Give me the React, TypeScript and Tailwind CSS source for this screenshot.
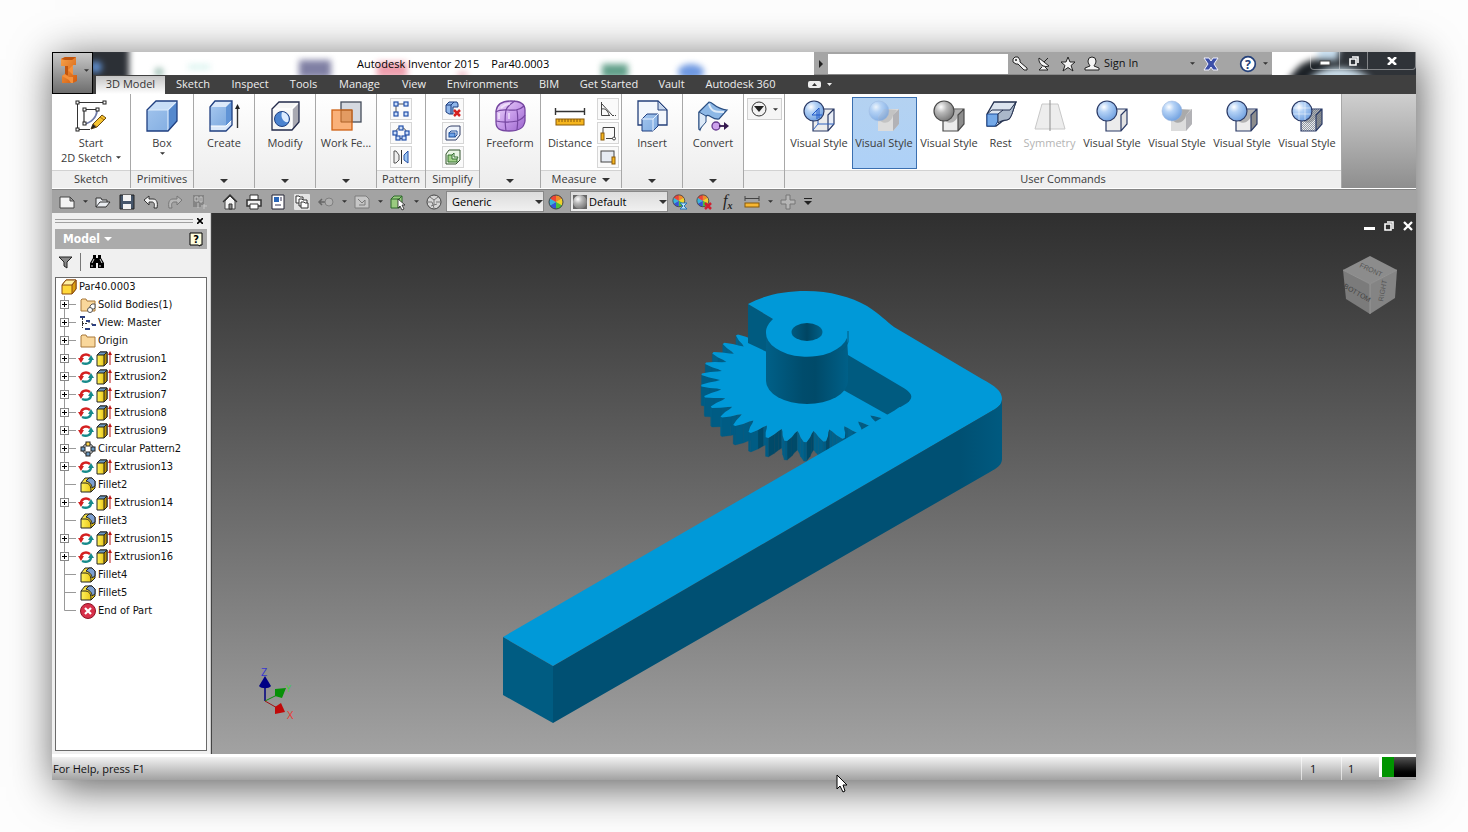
import { useState, type ReactNode } from 'react';
import { clsx } from 'clsx';

/* ------------------------------------------------------------------ */
/* Icons                                                               */
/* ------------------------------------------------------------------ */

interface IconProps {
  children: ReactNode;
  size?: 'sm' | 'md' | 'lg';
}

const Icon = ({ children, size = 'lg' }: IconProps) => (
  <svg
    viewBox={size === 'lg' ? '0 0 32 32' : '0 0 16 16'}
    aria-hidden="true"
    className={clsx('block shrink-0 overflow-visible', size === 'lg' && 'size-8', size === 'md' && 'size-[18px]', size === 'sm' && 'size-4')}
    fill="none"
  >
    {children}
  </svg>
);

const Defs = () => (
  <svg className="absolute size-0" aria-hidden="true">
    <defs>
      <radialGradient id="ballBlue" cx="0.35" cy="0.3" r="0.75">
        <stop offset="0" stopColor="#fff" />
        <stop offset="0.35" stopColor="#b4d2f6" />
        <stop offset="1" stopColor="#6e9fdf" />
      </radialGradient>
      <radialGradient id="ballGray" cx="0.35" cy="0.3" r="0.75">
        <stop offset="0" stopColor="#fff" />
        <stop offset="0.4" stopColor="#b8b8b8" />
        <stop offset="1" stopColor="#757575" />
      </radialGradient>
      <linearGradient id="boxBlue" x1="0" y1="0" x2="1" y2="1">
        <stop offset="0" stopColor="#a4c6ee" />
        <stop offset="1" stopColor="#7fabe0" />
      </linearGradient>
      <linearGradient id="purple" x1="0" y1="0" x2="1" y2="1">
        <stop offset="0" stopColor="#f1ddfc" />
        <stop offset="0.5" stopColor="#c79bea" />
        <stop offset="1" stopColor="#9a63cc" />
      </linearGradient>
      <linearGradient id="yellow" x1="0" y1="0" x2="1" y2="0">
        <stop offset="0" stopColor="#fff35c" />
        <stop offset="1" stopColor="#e3b800" />
      </linearGradient>
      <linearGradient id="logo" x1="0" y1="0" x2="1" y2="1">
        <stop offset="0" stopColor="#f7a24a" />
        <stop offset="1" stopColor="#d25a0c" />
      </linearGradient>
      <pattern id="checker" width="2" height="2" patternUnits="userSpaceOnUse">
        <rect width="1" height="1" fill="#6a7788" />
        <rect x="1" y="1" width="1" height="1" fill="#6a7788" />
      </pattern>
    </defs>
  </svg>
);

const SketchIcon = () => (
  <Icon>
    <path d="M2 2.500H29M2.500 2V30M2 29.500H15" stroke="#333" />
    <path d="M9 24V9.500H22" stroke="#333" strokeWidth="1.200" />
    <path d="M22 10C22 17 16 23 9 24" stroke="#6f7ba8" strokeWidth="1.800" />
    {[[2, 2], [29, 2], [2, 29], [9, 9], [22, 9], [9, 23]].map(([x, y]) => (
      <rect key={`${x}-${y}`} x={x - 1} y={y - 1} width="3" height="3" fill="#fff" stroke="#222" />
    ))}
    <path d="M16 29l2-5 9-9 4 3-9 9z" fill="#f5c330" stroke="#6b4a10" />
    <path d="M25 17l4 3M18 24l4 3" stroke="#a86d12" />
    <path d="M16 29l2-5 3 3z" fill="#222" />
  </Icon>
);

const BoxIcon = () => (
  <Icon>
    <path d="M1 10L10 1H31V21L22 31H1Z" fill="url(#boxBlue)" />
    <path d="M1 10L10 1H31L22 10Z" fill="#c8def7" />
    <path d="M22 10L31 1V21L22 31Z" fill="#5488cd" />
    <path d="M1 10H22L31 1M22 10V31" stroke="#dcebfc" strokeWidth="1.200" />
    <path d="M1 10L10 1H31V21L22 31H1Z" stroke="#1f3f80" strokeWidth="1.300" />
  </Icon>
);

const CreateIcon = () => (
  <Icon>
    <path d="M2 7L7 1H24V25L18 31H2Z" fill="#dbe9fa" />
    <path d="M2 7H18V26H2Z" fill="url(#boxBlue)" />
    <path d="M18 7L24 1V20L18 26Z" fill="#5f93d6" />
    <path d="M2 26H18L24 20" stroke="#fff" />
    <path d="M2 7L7 1H24V25L18 31H2Z" stroke="#1f3f80" strokeWidth="1.300" />
    <path d="M29.500 28V7" stroke="#333" strokeWidth="1.400" />
    <path d="M27 9L29.500 4L32 9Z" fill="#222" />
  </Icon>
);

const ModifyIcon = () => (
  <Icon>
    <path d="M3 9L10 2H30V22L23 30H3Z" fill="#f6f6f6" />
    <path d="M23 9L30 2V22L23 30Z" fill="#a9a9b2" />
    <path d="M3 9H23V30M23 9L30 2" stroke="#fff" strokeWidth="1.500" />
    <path d="M3 9L10 2H30V22L23 30H3Z" stroke="#222a4a" strokeWidth="1.300" />
    <circle cx="13" cy="19" r="7.500" fill="#4a82cf" stroke="#1f3f80" />
    <path d="M13 12A7 7 0 0 1 19 22C15 23 11 18 13 12" fill="#dcebff" />
  </Icon>
);

const WorkIcon = () => (
  <Icon>
    <rect x="11" y="2" width="20" height="20" fill="#d5d9e0" stroke="#444c5a" strokeWidth="1.300" />
    <rect x="2" y="10" width="20" height="20" fill="#f9a96a" fillOpacity=".9" stroke="#cf6215" strokeWidth="1.300" />
    <path d="M11 10H22V22H11Z" fill="#c97f45" fillOpacity=".4" stroke="#a85a20" strokeWidth=".8" />
  </Icon>
);

const FreeformIcon = () => (
  <Icon>
    <path d="M2 11C3 4 8 1 17 1C26 1 31 4 31 10V21C30 29 24 31 15 31C6 31 2 29 2 22Z" fill="url(#purple)" stroke="#7546a0" strokeWidth="1.300" />
    <path d="M2 12C8 8 14 11 22 10C27 9 29 7 30 6M12 31C11 24 11 15 12 10C14 5 18 3 21 1M2 21C10 23 17 22 23 21C28 19 30 17 31 15M23 30C24 22 24 16 23 10" stroke="#7546a0" strokeWidth="1.200" />
    <path d="M7 8C11 4 14 4 16 4M15 13V19M5 13V19" stroke="#fff" strokeWidth="2" opacity=".5" />
  </Icon>
);

const DistanceIcon = () => (
  <Icon>
    <path d="M2 11.500H30M1.500 8V15M30.500 8V15" stroke="#333" strokeWidth="1.400" />
    <rect x="2" y="19" width="28" height="6" fill="#f5b51e" stroke="#8a5a08" />
    <path d="M5 19v3M8 19v3M11 19v3M14 19v3M17 19v3M20 19v3M23 19v3M26 19v3" stroke="#8a5a08" />
  </Icon>
);

const InsertIcon = () => (
  <Icon>
    <path d="M2 1H22L31 10V25H2Z" fill="#f3f7fc" stroke="#24407a" strokeWidth="1.300" />
    <path d="M22 1V10H31Z" fill="#c6d6ec" stroke="#24407a" />
    <path d="M6 19L11 14H22V26L17 31H6Z" fill="url(#boxBlue)" stroke="#1f3f80" />
    <path d="M6 19H17V31M17 19L22 14" stroke="#e6f1ff" />
  </Icon>
);

const ConvertIcon = () => (
  <Icon>
    <path d="M2 12L12 2C16 2 18 9 30 10L22 19C15 20 12 13 9 16L3 30L2 28Z" fill="#8db8e6" stroke="#2b4f82" strokeWidth="1.200" />
    <path d="M2 12L9 16V22L2 30Z" fill="#dce9f7" stroke="#2b4f82" />
    <path d="M12 4C14 12 19 12 27 12" stroke="#fff" strokeOpacity=".7" strokeWidth="2" />
    <circle cx="19" cy="26" r="4" fill="#cda2ec" stroke="#66398f" strokeWidth="1.300" />
    <path d="M22 26H30" stroke="#35194f" strokeWidth="1.800" />
    <path d="M27 22L32 26L27 30Z" fill="#35194f" />
  </Icon>
);

type BallKind = 'wire' | 'realistic' | 'gray' | 'plain' | 'soft' | 'edges' | 'sketchy';

const StyleIcon = ({ kind }: { kind: BallKind }) => {
  const soft = kind === 'realistic' || kind === 'soft';
  const line = soft ? 'none' : kind === 'gray' ? '#4a4a4a' : '#2a3a66';
  const shaded = kind !== 'plain' && kind !== 'wire';
  return (
    <Icon>
      <path d="M10 16L16 9H31V24L25 31H10Z" fill={soft ? '#dcdcdc' : '#ececec'} />
      <path d="M25 15L31 9V24L25 31Z" fill={kind === 'wire' ? '#e9eef7' : kind === 'plain' ? '#e2e2e2' : soft ? '#b2b2b6' : '#8d8d8d'} />
      {shaded && <path d="M10 18C14 26 24 23 25 15L29 10L16 9Z" fill="#777" fillOpacity={kind === 'realistic' ? 0.25 : 0.5} />}
      {kind === 'sketchy' && <path d="M10 16L16 9H31V24L25 31H10Z" fill="url(#checker)" fillOpacity=".7" />}
      {!soft && <path d="M10 16L16 9H31V24L25 31H10ZM25 31V15L31 9" stroke={line} strokeWidth="1.200" />}
      {kind === 'wire' && <path d="M10 30L15 24H31M15 24V17" stroke="#2f62c0" />}
      <circle
        cx="11"
        cy="11"
        r="10"
        fill={kind === 'gray' ? 'url(#ballGray)' : 'url(#ballBlue)'}
        stroke={soft ? '#9ab2d8' : line}
        strokeWidth={soft ? 0.5 : 1.2}
        opacity={kind === 'realistic' ? 0.75 : 1}
      />
      {kind === 'wire' && <path d="M9 15L16 8V18M9 15H19M14 10V19" stroke="#1f58c8" />}
      {kind === 'sketchy' && <path d="M2 8H20M2 14H20M8 2V20M14 2V20" stroke="#fff" strokeOpacity=".5" />}
    </Icon>
  );
};

const RestIcon = () => (
  <Icon>
    <path d="M2 14L9 2H31C28 8 28 14 24 19C21 21 18 19 15 23L11 26H2Z" fill="#dce4ee" stroke="#222f4e" strokeWidth="1.300" />
    <path d="M2 14H13V21L10 26H2Z" fill="#74a9e8" stroke="#1f4f9a" />
    <path d="M13 14L18 10H25L31 2C28 10 27 16 24 19C21 21 18 19 13 23Z" fill="#aab8ca" stroke="#222f4e" />
    <path d="M2 14L7 10H18" stroke="#222f4e" />
  </Icon>
);

const SymmetryIcon = () => (
  <Icon>
    <path d="M8 4H24L31 29H1Z" fill="#ededed" stroke="#c8c8c8" />
    <path d="M16 0V31" stroke="#8d8d8d" />
  </Icon>
);

const Squares = ({ at }: { at: number[][] }) => (
  <>
    {at.map(([x, y]) => (
      <rect key={`${x}-${y}`} x={x - 2} y={y - 2} width="4" height="4" fill="#cfe0fa" stroke="#2450a8" strokeWidth="1.200" />
    ))}
  </>
);

const patternIcons = [
  {
    label: 'Rectangular',
    icon: (
      <>
        <path d="M3 3H13M3 3V13" stroke="#555" />
        <Squares at={[[3, 3], [13, 3], [3, 13], [13, 13]]} />
      </>
    ),
  },
  {
    label: 'Circular',
    icon: (
      <>
        <circle cx="8" cy="8" r="5.500" stroke="#555" />
        <Squares at={[[8, 3], [2, 8], [14, 8], [5, 13], [11, 13]]} />
      </>
    ),
  },
  {
    label: 'Mirror',
    icon: (
      <>
        <path d="M1 2H3L6 6V11L3 14H1Z" fill="#eee" stroke="#555" />
        <path d="M8.500 1V15" stroke="#333" />
        <path d="M15 2L11 6V11L15 14Z" fill="#9cc6f2" stroke="#2450a8" />
      </>
    ),
  },
];

const simplifyIcons = [
  {
    label: 'Remove Details',
    icon: (
      <>
        <path d="M1 4L4 1H12L13 3V6H8V13H4L1 11Z" fill="#8fb6ea" stroke="#1f3f80" />
        <path d="M1 4H6V13M6 4L9 1" stroke="#1f3f80" />
        <path d="M9 9L15 15M15 9L9 15" stroke="#d42020" strokeWidth="2.500" />
      </>
    ),
  },
  {
    label: 'Bounding Box',
    icon: (
      <>
        <path d="M1 6C1 3 4 1 7 1H15V10L11 15H1Z" fill="#eef3fb" stroke="#333f66" />
        <rect x="4" y="8" width="6" height="4" fill="#6ea4ea" stroke="#1f4f9a" />
        <path d="M4 8L6 6H12V10L10 12" stroke="#1f4f9a" />
      </>
    ),
  },
  {
    label: 'Merge',
    icon: (
      <>
        <path d="M1 5L4 1H15V11L11 15H1Z" fill="#eaf5e4" stroke="#35552f" />
        <path d="M3 6H7V10H12V13H3Z" fill="#a4d48c" stroke="#35702f" />
        <path d="M7 6L9 4V8H13L12 10" stroke="#35702f" />
      </>
    ),
  },
];

const measureIcons = [
  {
    label: 'Angle',
    icon: (
      <>
        <path d="M1.500 1V14.500H10M2 3L12 14M2 8C5 7 8 10 9 14" stroke="#444" />
        <path d="M12 14.500H16" stroke="#444" strokeDasharray="2 1" />
      </>
    ),
  },
  {
    label: 'Loop',
    icon: (
      <>
        <path d="M3 8V2.500H14.500V13.500H6" stroke="#444" />
        <rect x="1" y="8" width="3" height="7" fill="#f5b51e" stroke="#8a5a08" />
        <circle cx="14" cy="13.500" r="1.500" fill="#fff" stroke="#444" />
      </>
    ),
  },
  {
    label: 'Area',
    icon: (
      <>
        <rect x="1" y="2" width="13" height="11" fill="#e6ebf3" stroke="#444" />
        <rect x="12" y="8" width="3" height="7" fill="#f5b51e" stroke="#8a5a08" />
      </>
    ),
  },
];

const Caret = ({ wide = false }: { wide?: boolean }) => (
  <svg viewBox="0 0 8 4" aria-hidden="true" className={wide ? 'h-1 w-2' : 'h-[3px] w-[5px]'}>
    <path d="M0 0H8L4 4Z" fill="#333" />
  </svg>
);

/* ------------------------------------------------------------------ */
/* Title bar and tabs                                                  */
/* ------------------------------------------------------------------ */

const AppButton = () => (
  <button
    type="button"
    aria-label="Application menu"
    className="flex w-[41px] shrink-0 items-center justify-between border border-black bg-gradient-to-b from-[#c9c9c9] to-[#6e6e6e] pr-[3px] pb-[6px] pl-[7px]"
  >
    <svg viewBox="0 0 18 28" className="h-7 w-[18px]" aria-hidden="true">
      <path d="M1 3L5 1H16V9H13V19H17V25L13 27H2V20L5 18V10H1Z" fill="url(#logo)" />
      <path d="M1 3L5 1H16L12 4H5ZM5 10H8V19L5 21Z" fill="#c2540c" />
      <path d="M13 9L8 14L13 19ZM2 20L5 18L9 21H13V27H11L9 24Z" fill="#f5913c" />
    </svg>
    <Caret />
  </button>
);

const GlassBackdrop = () => (
  <svg className="absolute inset-0 size-full" viewBox="0 0 721 23" preserveAspectRatio="xMinYMid slice" aria-hidden="true">
    <g className="blur-[3px]">
      <rect x="-10" y="-6" width="46" height="36" fill="#2c3036" />
      <circle cx="3" cy="15" r="6" fill="#5f8fd0" />
      <circle cx="66" cy="20" r="4" fill="#8fb5a8" />
      <rect x="95" y="13" width="22" height="4" fill="#d0f0eb" />
      <rect x="206" y="8" width="32" height="18" fill="#8080a4" />
      <rect x="284" y="10" width="30" height="16" fill="#ee9fae" />
      <rect x="365" y="20" width="9" height="6" fill="#eeb3bd" />
      <rect x="509" y="12" width="26" height="14" fill="#62a08a" />
      <ellipse cx="598" cy="20" rx="13" ry="8" fill="#6f99e2" />
    </g>
  </svg>
);

const HelpTools = () => (
  <div className="flex w-[458px] shrink-0 items-center border-b border-[#888] bg-[#a5a5a5] pt-px text-[#111]">
    <span className="flex w-[14px] justify-center">
      <svg viewBox="0 0 4 8" className="h-2 w-1" aria-hidden="true"><path d="M0 0L4 4L0 8Z" fill="#222" /></svg>
    </span>
    <input type="text" aria-label="Search help" className="h-[20px] w-[180px] bg-white px-1 text-[11px] outline-none" />
    <div className="flex w-24 items-center justify-around">
      <button type="button" aria-label="Subscription">
        <Icon size="sm">
          <path d="M1 3L3 1H6L8 4V6L15 12V14H12L6 8H4L1 6Z" fill="#f4f4f4" stroke="#222" />
          <circle cx="4" cy="4" r="1" fill="#222" />
        </Icon>
      </button>
      <button type="button" aria-label="Communication center">
        <Icon size="sm">
          <path d="M3 2C2 8 8 12 13 10Z" fill="#f4f4f4" stroke="#222" />
          <path d="M8 6L12 2M6 11L3 14H12L9 11" fill="#f4f4f4" stroke="#222" />
        </Icon>
      </button>
      <button type="button" aria-label="Favorites">
        <Icon size="sm">
          <path d="M8 1L10 6H15L11 9.500L13 15L8 11.500L3 15L5 9.500L1 6H6Z" fill="#f4f4f4" stroke="#222" />
        </Icon>
      </button>
      <button type="button" aria-label="Account">
        <Icon size="sm">
          <path d="M4 5A4 4 0 0 1 12 5C12 8 10 9 10 10L15 12V14H1V12L6 10C6 9 4 8 4 5Z" fill="#f4f4f4" stroke="#222" />
        </Icon>
      </button>
    </div>
    <button type="button" className="flex flex-1 items-center justify-between pr-2 text-[11px]">
      Sign In
      <Caret />
    </button>
    <button type="button" aria-label="Exchange apps" className="mr-5">
      <Icon size="sm">
        <path d="M1 2H6L8 5L10 2H15L11 8L15 14H10L8 11L6 14H1L5 8Z" fill="#3d50a8" stroke="#f2f2ff" />
      </Icon>
    </button>
    <button type="button" aria-label="Help" className="flex items-center gap-[6px] pr-1">
      <Icon size="md">
        <circle cx="8" cy="8" r="6.500" fill="#fff" stroke="#24407a" strokeWidth="1.500" />
        <text x="8" y="12" textAnchor="middle" fontSize="11" fontWeight="700" fontFamily="Open Sans, sans-serif" fill="#24407a">?</text>
      </Icon>
      <Caret />
    </button>
  </div>
);

const WindowControls = () => (
  <div className="relative flex w-[144px] shrink-0 justify-end overflow-hidden bg-[#2f3338]">
    <svg className="absolute inset-0 size-full" viewBox="0 0 144 23" preserveAspectRatio="none" aria-hidden="true">
      <g className="blur-[3px]">
        <path d="M-9 -9H72L64 4L30 12L14 30H-9Z" fill="#fff" />
        <path d="M16 28C26 12 36 4 62 8L40 28Z" fill="#1c2126" />
        <path d="M36 28C50 12 82 12 100 28Z" fill="#cfe3f0" />
        <rect x="46" y="-4" width="20" height="12" fill="#c5dced" />
      </g>
    </svg>
    <div className="relative mb-[5px] flex rounded-b border border-t-0 border-white/40">
      <button type="button" aria-label="Minimize" className="flex w-[29px] items-center justify-center border-r border-white/40">
        <svg viewBox="0 0 12 10" className="h-[10px] w-3" aria-hidden="true"><rect x="1" y="5" width="10" height="4" fill="#fff" stroke="#444" /></svg>
      </button>
      <button type="button" aria-label="Restore" className="flex w-7 items-center justify-center border-r border-white/40">
        <svg viewBox="0 0 10 10" className="size-[10px]" fill="none" aria-hidden="true"><path d="M1 3H7V9H1ZM3 1H9V7" stroke="#fff" strokeWidth="1.600" /></svg>
      </button>
      <button type="button" aria-label="Close" className="flex w-[47px] items-center justify-center">
        <svg viewBox="0 0 10 8" className="h-2 w-[10px]" aria-hidden="true"><path d="M1 0L9 8M9 0L1 8" stroke="#fff" strokeWidth="2.500" /></svg>
      </button>
    </div>
  </div>
);

const tabs = [
  { label: '3D Model', width: 'w-[69px]' },
  { label: 'Sketch', width: 'w-[56px]' },
  { label: 'Inspect', width: 'w-[58px]' },
  { label: 'Tools', width: 'w-[49px]' },
  { label: 'Manage', width: 'w-[63px]' },
  { label: 'View', width: 'w-[46px]' },
  { label: 'Environments', width: 'w-[91px]' },
  { label: 'BIM', width: 'w-[42px]' },
  { label: 'Get Started', width: 'w-[78px]' },
  { label: 'Vault', width: 'w-[47px]' },
  { label: 'Autodesk 360', width: 'w-[91px]' },
];

const Header = () => {
  const [active, setActive] = useState('3D Model');
  return (
    <header className="flex h-[42px] bg-[#404040]">
      <AppButton />
      <div className="flex min-w-0 flex-1 flex-col">
        <div className="flex h-[23px]">
          <div className="relative flex-1 overflow-hidden bg-white">
            <GlassBackdrop />
            <h1 className="relative flex gap-3 pl-[264px] text-[11px] leading-[23px] whitespace-nowrap text-black">
              <span>Autodesk Inventor 2015</span>
              <span>Par40.0003</span>
            </h1>
          </div>
          <HelpTools />
          <WindowControls />
        </div>
        <nav className="flex h-[19px] items-stretch pt-px pl-[3px]">
          {tabs.map((tab) => (
            <button
              key={tab.label}
              type="button"
              onClick={() => setActive(tab.label)}
              className={clsx(
                tab.width,
                'shrink-0 pb-[2px] text-center text-[11px] leading-[16px] whitespace-nowrap',
                tab.label === active ? 'bg-gradient-to-b from-[#c4c4c4] to-white text-[#333]' : 'text-[#eee]'
              )}
            >
              {tab.label}
            </button>
          ))}
          <button type="button" aria-label="Minimize ribbon" className="ml-[22px] flex items-center gap-[6px] pb-[2px]">
            <svg viewBox="0 0 13 7" className="h-[7px] w-[13px]" aria-hidden="true">
              <rect width="13" height="7" rx="2" fill="#eee" />
              <path d="M4 5L6.500 2L9 5Z" fill="#333" />
            </svg>
            <svg viewBox="0 0 5 3" className="h-[3px] w-[5px]" aria-hidden="true"><path d="M0 0H5L2.500 3Z" fill="#eee" /></svg>
          </button>
        </nav>
      </div>
    </header>
  );
};

/* ------------------------------------------------------------------ */
/* Ribbon                                                              */
/* ------------------------------------------------------------------ */

interface PanelProps {
  width: string;
  title?: string;
  more?: boolean;
  children: ReactNode;
}

const Panel = ({ width, title, more, children }: PanelProps) => (
  <section className={clsx(width, 'flex shrink-0 flex-col border-r border-[#a8a8a8] bg-white')}>
    <div className="flex flex-1 justify-center">{children}</div>
    <h2 className="flex h-[18px] items-center justify-center gap-[6px] border-t border-[#d2d2d2] bg-[#efefef] text-[11px] text-[#3a3a3a]">
      {title}
      {more && <Caret wide />}
    </h2>
  </section>
);

const MenuPanel = ({ label, icon }: { label: string; icon: ReactNode }) => (
  <button
    type="button"
    className="flex w-[61px] shrink-0 flex-col items-center border-r border-[#a8a8a8] bg-gradient-to-b from-white to-[#ececec] pt-[6px] pb-[5px]"
  >
    {icon}
    <span className="mt-[3px] text-[11px] leading-[15px] whitespace-nowrap">{label}</span>
    <span className="mt-auto"><Caret wide /></span>
  </button>
);

const SmallStack = ({ items }: { items: { label: string; icon: ReactNode }[] }) => (
  <div className="flex flex-col gap-[2px] pt-1">
    {items.map((item) => (
      <button
        key={item.label}
        type="button"
        aria-label={item.label}
        className="flex size-[22px] items-center justify-center border border-[#d6d6d6] bg-[#fafafa]"
      >
        <Icon size="sm">{item.icon}</Icon>
      </button>
    ))}
  </div>
);

const userCommands = [
  { label: 'Visual Style', width: 'w-[65px]', icon: <StyleIcon kind="wire" /> },
  { label: 'Visual Style', width: 'w-[65px]', icon: <StyleIcon kind="realistic" />, active: true },
  { label: 'Visual Style', width: 'w-[65px]', icon: <StyleIcon kind="gray" /> },
  { label: 'Rest', width: 'w-[38px]', icon: <RestIcon /> },
  { label: 'Symmetry', width: 'w-[60px]', icon: <SymmetryIcon />, disabled: true },
  { label: 'Visual Style', width: 'w-[65px]', icon: <StyleIcon kind="plain" /> },
  { label: 'Visual Style', width: 'w-[65px]', icon: <StyleIcon kind="soft" /> },
  { label: 'Visual Style', width: 'w-[65px]', icon: <StyleIcon kind="edges" /> },
  { label: 'Visual Style', width: 'w-[65px]', icon: <StyleIcon kind="sketchy" /> },
];

const Ribbon = () => (
  <div className="flex h-[95px] border-b border-white bg-gradient-to-b from-[#cfcfcf] to-[#8e8e8e] text-[#3a3a3a]">
    <Panel width="w-[79px]" title="Sketch">
      <button type="button" className="flex w-full flex-col items-center pt-[6px] text-[11px] leading-[15px]">
        <SketchIcon />
        <span className="mt-[3px]">Start</span>
        <span className="flex w-full items-center justify-center gap-1">2D Sketch <Caret /></span>
      </button>
    </Panel>
    <Panel width="w-[63px]" title="Primitives">
      <button type="button" className="flex flex-col items-center pt-[6px] text-[11px] leading-[15px]">
        <BoxIcon />
        <span className="mt-[3px]">Box</span>
        <span className="mt-[2px]"><Caret /></span>
      </button>
    </Panel>
    <MenuPanel label="Create" icon={<CreateIcon />} />
    <MenuPanel label="Modify" icon={<ModifyIcon />} />
    <MenuPanel label="Work Fe..." icon={<WorkIcon />} />
    <Panel width="w-[49px]" title="Pattern"><SmallStack items={patternIcons} /></Panel>
    <Panel width="w-[54px]" title="Simplify"><SmallStack items={simplifyIcons} /></Panel>
    <MenuPanel label="Freeform" icon={<FreeformIcon />} />
    <Panel width="w-[81px]" title="Measure" more>
      <button type="button" className="flex w-[54px] flex-col items-center pt-[6px] text-[11px] leading-[15px]">
        <DistanceIcon />
        <span className="mt-[3px]">Distance</span>
      </button>
      <SmallStack items={measureIcons} />
    </Panel>
    <MenuPanel label="Insert" icon={<InsertIcon />} />
    <MenuPanel label="Convert" icon={<ConvertIcon />} />
    <Panel width="w-[41px]">
      <button type="button" aria-label="More" className="mt-1 flex h-[22px] w-[35px] items-center justify-center gap-[6px] border border-[#d0d0d0] bg-[#f5f5f5]">
        <Icon size="sm">
          <circle cx="8" cy="8" r="7" fill="#f2f2f2" stroke="#333" />
          <path d="M3 5H13L8 11Z" fill="#222" />
        </Icon>
        <Caret />
      </button>
    </Panel>
    <Panel width="w-[557px]" title="User Commands">
      {userCommands.map((cmd, index) => (
        <button
          key={index}
          type="button"
          disabled={cmd.disabled}
          className={clsx(
            cmd.width,
            'mt-[3px] flex h-[72px] shrink-0 flex-col items-center border pt-[2px] text-[11px] leading-[15px] whitespace-nowrap',
            cmd.active ? 'border-[#3a6fb0] bg-gradient-to-b from-[#b4d2f1] to-[#aed1f7]' : 'border-transparent',
            cmd.disabled && 'text-[#b4b4b4]'
          )}
        >
          {cmd.icon}
          <span className="mt-[3px]">{cmd.label}</span>
        </button>
      ))}
    </Panel>
  </div>
);

/* ------------------------------------------------------------------ */
/* Quick access toolbar                                                */
/* ------------------------------------------------------------------ */

const ColorWheel = () => (
  <>
    <path d="M8 8V1A7 7 0 0 1 14 4.500Z" fill="#f08a2a" />
    <path d="M8 8L14 4.500A7 7 0 0 1 14 11.500Z" fill="#f0d22a" />
    <path d="M8 8L14 11.500A7 7 0 0 1 8 15Z" fill="#4cc23a" />
    <path d="M8 8V15A7 7 0 0 1 2 11.500Z" fill="#3355d8" />
    <path d="M8 8L2 11.500A7 7 0 0 1 2 4.500Z" fill="#38b4dc" />
    <path d="M8 8L2 4.500A7 7 0 0 1 8 1Z" fill="#ec4436" />
    <circle cx="8" cy="8" r="7" stroke="#444" />
  </>
);

interface QuickItem {
  label: string;
  caret?: boolean;
  gap?: boolean;
  icon?: ReactNode;
}

const quickItems: QuickItem[] = [
  { label: 'New', icon: <path d="M1 3H11L15 7V14H1ZM11 3V7H15" fill="#f4f4f4" stroke="#444" /> },
  { label: 'New options', caret: true },
  { label: 'Open', icon: <path d="M1 13V4H6L7 6H12V8M1 13L5 8H15L11 13Z" fill="#e9ecf0" stroke="#333" /> },
  {
    label: 'Save',
    icon: (
      <>
        <path d="M1 1H15V15H1Z" fill="#46566b" stroke="#222" />
        <path d="M4 1H12V7H4ZM4 10H12V15H4Z" fill="#f2f2f2" />
      </>
    ),
  },
  { label: 'Undo', icon: <path d="M1 6L6 2V5H10C14 5 15 9 14 14H11C12 10 11 8 9 8H6V11Z" fill="#f2f2f2" stroke="#333" /> },
  { label: 'Redo', icon: <path d="M15 6L10 2V5H6C2 5 1 9 2 14H5C4 10 5 8 7 8H10V11Z" fill="#b8b8b8" stroke="#777" /> },
  {
    label: 'Update',
    icon: (
      <>
        <path d="M2 1H13V13H2Z" fill="#858585" />
        <path d="M4 3H7V7H4ZM9 3H11V8H9ZM7 9V14M13 10V15M10 12H16" stroke="#c6c6c6" />
      </>
    ),
  },
  {
    label: 'Home',
    gap: true,
    icon: (
      <>
        <path d="M3 7L8 2L13 7V15H3Z" fill="#f4f4f4" stroke="#444" />
        <path d="M1 8L8 1L15 8" stroke="#333" strokeWidth="1.300" />
        <path d="M7 10H10V15H7Z" fill="#8d8d8d" stroke="#333" />
      </>
    ),
  },
  {
    label: 'Print',
    icon: (
      <>
        <path d="M4 1H12V6H4Z" fill="#fff" stroke="#333" />
        <path d="M1 6H15V12H1Z" fill="#f2f2f2" stroke="#333" strokeWidth="1.500" />
        <path d="M4 10H12V15H4Z" fill="#fff" stroke="#333" />
      </>
    ),
  },
  {
    label: 'Properties',
    icon: (
      <>
        <path d="M2 1H14V15H2Z" fill="#fff" stroke="#223" />
        <path d="M4 3H9V8H4Z" fill="#2a66b8" />
        <path d="M10 4H12M10 6H12M5 11H11" stroke="#335" />
      </>
    ),
  },
  {
    label: 'Copy',
    icon: (
      <>
        <rect width="16" height="16" rx="1" fill="#e4e4e4" />
        <path d="M2 2H5L6 3H9V9H2Z" fill="#fff" stroke="#333" />
        <path d="M5 5H8L9 6H13V12H5Z" fill="#fff" stroke="#333" />
        <path d="M7 8H10L11 9H14V14H7Z" fill="#fff" stroke="#333" />
      </>
    ),
  },
  {
    label: 'Return',
    icon: (
      <>
        <path d="M1 8H8M4 5L1 8L4 11" stroke="#666" strokeWidth="1.500" />
        <circle cx="11" cy="8" r="4" fill="#b0b0b0" stroke="#808080" />
      </>
    ),
  },
  { label: 'Return options', caret: true },
  { label: 'Rebuild', icon: <path d="M1 2H12L15 5V14H1ZM4 5L8 9L11 6V11H5" fill="#c6c6c6" stroke="#7c7c7c" /> },
  { label: 'Rebuild options', caret: true },
  {
    label: 'Select',
    icon: (
      <>
        <path d="M1 5L4 2H12V11L9 14H1Z" fill="#9acb80" stroke="#2d6a2a" />
        <path d="M1 5H9V14M9 5L12 2" stroke="#2d6a2a" />
        <path d="M8 5V14L10 12L12 16L14 15L12 11H15Z" fill="#fff" stroke="#222" strokeWidth=".8" />
      </>
    ),
  },
  { label: 'Select options', caret: true },
  {
    label: 'Material',
    icon: (
      <>
        <circle cx="8" cy="8" r="7" fill="#d6d6d6" stroke="#444" />
        <path d="M4 3L8 6L12 3M2 8H6L8 14M10 8H14M8 6V11M5 12L11 10" stroke="#777" />
      </>
    ),
  },
];

const QuickButton = ({ item }: { item: QuickItem }) => (
  <button
    type="button"
    aria-label={item.label}
    className={clsx('flex h-full shrink-0 items-center justify-center', item.caret ? 'w-3' : 'w-6', item.gap && 'ml-[7px]')}
  >
    {item.caret ? <Caret /> : <Icon size="sm">{item.icon}</Icon>}
  </button>
);

const appearanceItems: QuickItem[] = [
  { label: 'Adjust appearance', icon: <><g transform="scale(.85)"><ColorWheel /></g><path d="M8 9H15L12 12L15 15H8L11 12Z" fill="#bfe3fa" stroke="#2277bb" /></> },
  { label: 'Clear appearance', icon: <><g transform="scale(.85)"><ColorWheel /></g><path d="M9 9L15 15M15 9L9 15" stroke="#d02030" strokeWidth="2.500" /></> },
  {
    label: 'Parameters',
    icon: (
      <text x="3" y="12" fontFamily="Liberation Serif, serif" fontStyle="italic" fontSize="16" fill="#222">
        f<tspan fontSize="10" dy="3" fontWeight="700">x</tspan>
      </text>
    ),
  },
  { label: 'Measure', icon: <><path d="M1 4.500H15M1 2V7M15 2V7" stroke="#444" /><rect x="1" y="9" width="14" height="4" fill="#f7b733" stroke="#8a5a08" /></> },
  { label: 'Measure options', caret: true },
  { label: 'Add', icon: <path d="M6 1H10V6H15V10H10V15H6V10H1V6H6Z" fill="#b5b5b5" stroke="#777" /> },
];

const QuickAccess = () => (
  <div className="flex h-6 items-center border-t border-[#858585] bg-[#a3a3a3] pl-[3px]">
    {quickItems.map((item) => <QuickButton key={item.label} item={item} />)}
    <div className="relative h-[21px] w-[98px] border border-[#888] bg-gradient-to-b from-[#dcdcdc] to-[#f0f0f0]">
      <select aria-label="Material" className="block h-[19px] w-full appearance-none pl-[5px] text-[11px] leading-[17px] text-black">
        <option>Generic</option>
      </select>
      <span className="pointer-events-none absolute inset-y-0 right-0 flex items-center"><Caret wide /></span>
    </div>
    <QuickButton item={{ label: 'Appearance', icon: <ColorWheel /> }} />
    <div className="relative ml-[2px] h-[21px] w-[98px] border border-[#888] bg-gradient-to-b from-[#dcdcdc] to-[#f0f0f0]">
      <select aria-label="Appearance" className="block h-[19px] w-full appearance-none pl-[18px] text-[11px] leading-[17px] text-black">
        <option>Default</option>
      </select>
      <span className="pointer-events-none absolute inset-y-0 left-[2px] flex items-center">
        <svg viewBox="0 0 14 14" className="size-[14px]" aria-hidden="true">
          <rect width="14" height="14" fill="#666" />
          <circle cx="7" cy="7" r="7" fill="url(#ballGray)" />
        </svg>
      </span>
      <span className="pointer-events-none absolute inset-y-0 right-0 flex items-center"><Caret wide /></span>
    </div>
    {appearanceItems.map((item) => <QuickButton key={item.label} item={item} />)}
    <button type="button" aria-label="Customize" className="flex w-4 justify-center">
      <svg viewBox="0 0 8 7" className="h-[7px] w-2" aria-hidden="true">
        <path d="M0 0H8V1H0ZM0 3H8L4 7Z" fill="#222" />
      </svg>
    </button>
  </div>
);

/* ------------------------------------------------------------------ */
/* Model browser                                                       */
/* ------------------------------------------------------------------ */

type NodeKind = 'bodies' | 'view' | 'folder' | 'extrusion' | 'pattern' | 'fillet' | 'end';

interface TreeNode {
  label: string;
  kind: NodeKind;
}

const tree: TreeNode[] = [
  { label: 'Solid Bodies(1)', kind: 'bodies' },
  { label: 'View: Master', kind: 'view' },
  { label: 'Origin', kind: 'folder' },
  { label: 'Extrusion1', kind: 'extrusion' },
  { label: 'Extrusion2', kind: 'extrusion' },
  { label: 'Extrusion7', kind: 'extrusion' },
  { label: 'Extrusion8', kind: 'extrusion' },
  { label: 'Extrusion9', kind: 'extrusion' },
  { label: 'Circular Pattern2', kind: 'pattern' },
  { label: 'Extrusion13', kind: 'extrusion' },
  { label: 'Fillet2', kind: 'fillet' },
  { label: 'Extrusion14', kind: 'extrusion' },
  { label: 'Fillet3', kind: 'fillet' },
  { label: 'Extrusion15', kind: 'extrusion' },
  { label: 'Extrusion16', kind: 'extrusion' },
  { label: 'Fillet4', kind: 'fillet' },
  { label: 'Fillet5', kind: 'fillet' },
  { label: 'End of Part', kind: 'end' },
];

const Folder = () => <path d="M1 14V3L2 2H6L7 4H15V14Z" fill="#f9d79b" stroke="#a8783a" />;

const nodeIcons: Record<NodeKind, ReactNode> = {
  bodies: (
    <>
      <Folder />
      <path d="M10 9L12 7H15V11L14 12H10Z" fill="#fff" stroke="#555" />
      <circle cx="10" cy="13" r="2.500" fill="#fff" stroke="#555" />
    </>
  ),
  view: (
    <>
      <path d="M2.500 3V13M2 8.500H7M6 13.500H9M9 6V9M11 9H14" stroke="#333" strokeDasharray="2 1" />
      <path d="M0 1H5V3H0ZM6 5H10V7H6ZM12 9H16V11H12ZM5 13H10V15H5Z" fill="#2b3f80" />
    </>
  ),
  folder: <Folder />,
  extrusion: (
    <>
      <path d="M1 4L4 1H11V12L8 15H1Z" fill="url(#yellow)" stroke="#222" />
      <path d="M1 4L4 1H11L8 4Z" fill="#6c9ac2" stroke="#222" />
      <path d="M8 4L11 1V12L8 15Z" fill="#b89200" stroke="#222" />
      <path d="M14 14V3" stroke="#c01818" />
      <path d="M12 4L14 0L16 4Z" fill="#c01818" />
    </>
  ),
  pattern: (
    <>
      <circle cx="8" cy="8" r="5.500" stroke="#222" />
      <rect x="6" y="1" width="4" height="4" fill="#ffd54a" stroke="#222" />
      <rect x="1" y="6" width="4" height="4" fill="#6c9ac2" stroke="#222" />
      <rect x="11" y="6" width="4" height="4" fill="#6c9ac2" stroke="#222" />
      <rect x="6" y="11" width="4" height="4" fill="#6c9ac2" stroke="#222" />
    </>
  ),
  fillet: (
    <>
      <path d="M1 6L5 1H12L15 4V11L11 15H1Z" fill="url(#yellow)" stroke="#222" />
      <path d="M6 4L9 1H12L15 4V9L12 11C12 7 9 5 6 4Z" fill="#7d9fd0" stroke="#222" />
      <path d="M1 6H6C10 7 11 9 11 15" stroke="#222" />
    </>
  ),
  end: (
    <>
      <circle cx="8" cy="8" r="7.500" fill="#d8304a" stroke="#8c1426" />
      <path d="M5 5L11 11M11 5L5 11" stroke="#fff" strokeWidth="2.200" />
    </>
  ),
};

const SyncIcon = () => (
  <Icon size="sm">
    <path d="M3 8C3 4 8 2 12 5" stroke="#d42020" strokeWidth="2.400" />
    <path d="M0 7H6L3 12Z" fill="#d42020" />
    <path d="M13 8C13 12 9 14 4 12" stroke="#178a8a" strokeWidth="2.400" />
    <path d="M10 9H16L13 4Z" fill="#178a8a" />
  </Icon>
);

const TreeRow = ({ node, last }: { node: TreeNode; last: boolean }) => {
  const leaf = node.kind === 'fillet' || node.kind === 'end';
  return (
    <li className="flex h-[18px] items-center">
      <svg viewBox="0 0 22 18" className="h-[18px] w-[22px] shrink-0" fill="none" aria-hidden="true">
        <path d={last ? 'M8.500 0V8.500H20' : 'M8.500 0V18M8 8.500H20'} stroke="#999" />
        {!leaf && (
          <>
            <rect x="4.500" y="4.500" width="8" height="8" fill="#fff" stroke="#888" />
            <path d="M6 8.500H11M8.500 6V11" stroke="#000" />
          </>
        )}
      </svg>
      {node.kind === 'extrusion' && <span className="mr-[2px]"><SyncIcon /></span>}
      <span className={clsx(node.kind !== 'extrusion' && 'ml-[2px]')}><Icon size="sm">{nodeIcons[node.kind]}</Icon></span>
      <span className="pl-[2px] whitespace-nowrap">{node.label}</span>
    </li>
  );
};

const Browser = () => (
  <aside className="flex w-[159px] shrink-0 flex-col border-r border-[#cfcfcf] bg-[#f0f0f0] px-[3px] pb-[3px] font-['DejaVu_Sans_Condensed','DejaVu_Sans',sans-serif] text-[11px] text-[#111]">
    <div className="flex h-4 items-center">
      <span className="h-[4px] flex-1 border-y border-[#a0a0a0]" />
      <button type="button" aria-label="Close browser" className="flex w-[14px] justify-center">
        <svg viewBox="0 0 6 6" className="size-[6px]" aria-hidden="true"><path d="M0 0L6 6M6 0L0 6" stroke="#000" strokeWidth="1.600" /></svg>
      </button>
    </div>
    <div className="flex h-5 items-center justify-between bg-[#ababab] pr-1 pl-2 text-[12px] font-bold text-white">
      <button type="button" className="flex items-center gap-1">
        Model
        <svg viewBox="0 0 8 4" className="h-1 w-2" aria-hidden="true"><path d="M0 0H8L4 4Z" fill="#fff" /></svg>
      </button>
      <button type="button" aria-label="Browser help">
        <svg viewBox="0 0 14 15" className="h-[15px] w-[14px]" aria-hidden="true">
          <path d="M1 1H13V13H11V14L9 13H1Z" fill="#ffffe0" stroke="#000" />
          <text x="7" y="11" textAnchor="middle" fontSize="11" fontWeight="700" fill="#000">?</text>
        </svg>
      </button>
    </div>
    <div className="flex h-7 items-center pb-[3px] pl-[3px]">
      <button type="button" aria-label="Filter">
        <Icon size="sm"><path d="M1 3H14L9 8V14L6 12V8Z" fill="#888" stroke="#222" /></Icon>
      </button>
      <span className="mx-[6px] h-[18px] border-l border-[#777]" />
      <button type="button" aria-label="Find" className="pl-[2px]">
        <Icon size="sm">
          <path d="M4 1H7V4H9V1H12V4L15 9V14H9V9H7V14H1V9L4 4Z" fill="#000" />
          <path d="M5 5L3 9M11 5L13 9M3 11V13M11 11V13" stroke="#ddd" />
        </Icon>
      </button>
    </div>
    <div className="flex-1 overflow-hidden border border-[#6a6a6a] bg-white">
      <div className="flex h-[18px] items-center gap-[2px] pl-[5px]">
        <Icon size="sm">
          <path d="M1 6L5 1H15V10L11 15H1Z" fill="#ffd83a" stroke="#8a4a10" />
          <path d="M1 6L5 1H15L11 6Z" fill="#fff0a0" stroke="#8a4a10" />
          <path d="M11 6L15 1V10L11 15Z" fill="#dba010" stroke="#8a4a10" />
        </Icon>
        Par40.0003
      </div>
      <ul>
        {tree.map((node, index) => (
          <TreeRow key={node.label} node={node} last={index === tree.length - 1} />
        ))}
      </ul>
    </div>
  </aside>
);

/* ------------------------------------------------------------------ */
/* Graphics window                                                     */
/* ------------------------------------------------------------------ */

const TEETH = 34;
const GEAR = { cx: 807, cy: 381, tilt: 0.577, depth: 19 };
// fraction of the pitch, radius
const toothProfile = [[-0.5, 87], [-0.38, 91], [-0.26, 98], [-0.07, 106], [0.07, 106], [0.26, 98], [0.38, 91]];

const gearPoints = Array.from({ length: TEETH }).flatMap((_, tooth) =>
  toothProfile.map(([offset, radius]) => {
    const angle = ((tooth + offset) * 2 * Math.PI) / TEETH + (91 * Math.PI) / 180;
    return [GEAR.cx + radius * Math.cos(angle), GEAR.cy + radius * Math.sin(angle) * GEAR.tilt];
  })
);

const gearWalls = gearPoints
  .map((from, index) => {
    const to = gearPoints[(index + 1) % gearPoints.length];
    const nx = to[1] - from[1];
    const ny = from[0] - to[0];
    return { from, to, facing: ny, side: nx / Math.hypot(nx, ny), depth: from[1] + to[1] };
  })
  .filter((wall) => wall.facing > 0)
  .sort((a, b) => a.depth - b.depth);

const toPoints = (points: number[][]) => points.map(([x, y]) => `${x.toFixed(1)},${y.toFixed(1)}`).join(' ');

const wallColor = (side: number) => {
  if (side < -0.5) return '#00628c';
  if (side < 0.4) return '#005c84';
  return '#004a69';
};

const PartModel = () => (
  <svg viewBox="212 213 1204 541" preserveAspectRatio="xMidYMid meet" className="absolute inset-0 size-full" role="img" aria-label="Part model">
    <defs>
      <linearGradient id="boss" x1="0" x2="1" y1="0" y2="0">
        <stop offset="0" stopColor="#006088" />
        <stop offset="0.45" stopColor="#004c6c" />
        <stop offset="0.6" stopColor="#004a69" />
        <stop offset="1" stopColor="#006088" />
      </linearGradient>
      <linearGradient id="hole" x1="0" x2="1" y1="0" y2="0">
        <stop offset="0" stopColor="#005a80" />
        <stop offset="0.5" stopColor="#004562" />
        <stop offset="1" stopColor="#006088" />
      </linearGradient>
      <linearGradient id="side" gradientUnits="userSpaceOnUse" x1="960" x2="1003" y1="0" y2="0">
        <stop offset="0" stopColor="#005073" />
        <stop offset="1" stopColor="#005a80" />
      </linearGradient>
    </defs>
    {gearWalls.map(({ from, to, side }, index) => (
      <polygon
        key={index}
        points={toPoints([from, to, [to[0], to[1] + GEAR.depth], [from[0], from[1] + GEAR.depth]])}
        fill={wallColor(side)}
        stroke={wallColor(side)}
        strokeWidth="0.3"
      />
    ))}
    <polygon points={toPoints(gearPoints)} fill="#0099d8" />
    <path d="M748 304L773 319L780 340L767 352L748 343Z" fill="#005b80" />
    <path d="M838 345L903 384L914 397L888 415L838 387Z" fill="#005b80" />
    <path d="M766 332V381A41 23 0 0 0 848 381V332Z" fill="url(#boss)" />
    <path
      d="M748 304C765 295 784 291 806 291C830 291 851 297 867 306C881 315 886 321 894 327L982 379C995 386 1002 391 1002 399C1002 405 997 408 990 412L553 666L503 637L904 405C915 399 913 393 902 387L848 355L847 338A41 24 0 0 1 766 332C766 327 769 323 773 319Z"
      fill="#0099d8"
    />
    <path d="M848 331V342A41 24 0 0 1 842 351" stroke="#005b80" fill="none" />
    <ellipse cx="807" cy="332" rx="15.500" ry="9" fill="url(#hole)" />
    <path d="M553 666L990 412C997 408 1002 405 1002 399V459C1002 465 997 468 990 472L553 723Z" fill="url(#side)" />
    <path d="M503 637L553 666V723L503 695Z" fill="#005c82" />
  </svg>
);

const AxisTriad = () => (
  <svg viewBox="0 -12 48 72" className="absolute bottom-[29px] left-[43px] h-[72px] w-[48px]" fontFamily="Open Sans, sans-serif" fontSize="11" aria-label="Axis indicator">
    <path d="M10 36V20" stroke="#000080" strokeWidth="1.500" />
    <path d="M10 36L22 30" stroke="#108a10" />
    <path d="M10 36L24 44" stroke="#a01010" />
    <path d="M10 11L16 21C14 24 6 24 4 21Z" fill="#000085" />
    <path d="M20 24L31 23L27 33L20 31Z" fill="#079007" />
    <path d="M20 42L26 38L30 47L20 49Z" fill="#c00808" />
    <text x="6" y="11" fill="#3838d0">Z</text>
    <text x="31" y="27" fill="#40d040" fontSize="9">Y</text>
    <text x="32" y="54" fill="#e83830">X</text>
  </svg>
);

const ViewCube = () => (
  <svg viewBox="0 0 58 60" className="h-[60px] w-[58px]" fontFamily="Liberation Sans, sans-serif" fontSize="7" textAnchor="middle" aria-label="View cube">
    <path d="M29 1L56 15L29 29L2 15Z" fill="#8c8c8c" />
    <path d="M2 15L29 29V59L5 44Z" fill="#7b7b7b" />
    <path d="M56 15L29 29V59L54 43Z" fill="#848484" />
    <path d="M2 15L29 29L56 15M29 29V59" stroke="#9c9c9c" fill="none" strokeWidth=".8" />
    <text fill="#555" transform="translate(29 17) rotate(25)">FRONT</text>
    <text fill="#444" transform="translate(15 40) rotate(30)">BOTTOM</text>
    <text fill="#555" transform="translate(44 36) rotate(-80)">RIGHT</text>
  </svg>
);

const Viewport = () => (
  <main className="relative flex-1 overflow-hidden border-l border-[#444] bg-gradient-to-b from-[#2f2f2f] to-[#a2a2a2]">
    <PartModel />
    <div className="relative flex justify-end gap-[9px] pt-2 pr-[3px]">
      <button type="button" aria-label="Minimize document">
        <svg viewBox="0 0 11 10" className="h-[10px] w-[11px]" aria-hidden="true"><rect x="0" y="6" width="11" height="3" fill="#fff" /></svg>
      </button>
      <button type="button" aria-label="Restore document">
        <svg viewBox="0 0 10 10" className="size-[10px]" fill="none" aria-hidden="true"><path d="M1 3H7V9H1ZM3 1H9V8" stroke="#fff" strokeWidth="1.600" /></svg>
      </button>
      <button type="button" aria-label="Close document">
        <svg viewBox="0 0 10 10" className="size-[10px]" aria-hidden="true"><path d="M1 1L9 9M9 1L1 9" stroke="#fff" strokeWidth="2.300" /></svg>
      </button>
    </div>
    <div className="relative flex justify-end pt-6 pr-[17px]"><ViewCube /></div>
    <AxisTriad />
  </main>
);

const StatusBar = () => (
  <footer className="relative flex h-[26px] items-stretch border-t-[3px] border-white bg-gradient-to-b from-[#f2f2f2] to-[#a2a2a2] text-[11px] text-[#111]">
    <p className="flex-1 pl-px leading-6">For Help, press F1</p>
    <span className="w-[40px] border-l border-white/60 pl-[8px] leading-6">1</span>
    <span className="w-[38px] border-l border-white/60 pl-[6px] leading-6">1</span>
    <div className="flex h-5 w-[37px] border-l-[3px] border-white bg-gradient-to-b from-[#555] to-black">
      <span className="w-3 bg-[#009400]" />
    </div>
    <svg viewBox="0 0 12 19" className="absolute top-[17px] left-[784px] h-[19px] w-3" aria-hidden="true">
      <path d="M1 1V15L4 12L7 18L9 17L7 11H11Z" fill="#fff" stroke="#000" />
    </svg>
  </footer>
);

export default function App() {
  return (
    <div className="flex min-h-screen bg-[#fdfdfd] p-[52px] font-['Open_Sans','Noto_Sans',sans-serif]">
      <Defs />
      <div className="flex min-w-0 flex-1 flex-col shadow-[3px_7px_40px_rgba(0,0,0,0.65)]">
        <Header />
        <Ribbon />
        <QuickAccess />
        <div className="flex flex-1">
          <Browser />
          <Viewport />
        </div>
        <StatusBar />
      </div>
    </div>
  );
}
